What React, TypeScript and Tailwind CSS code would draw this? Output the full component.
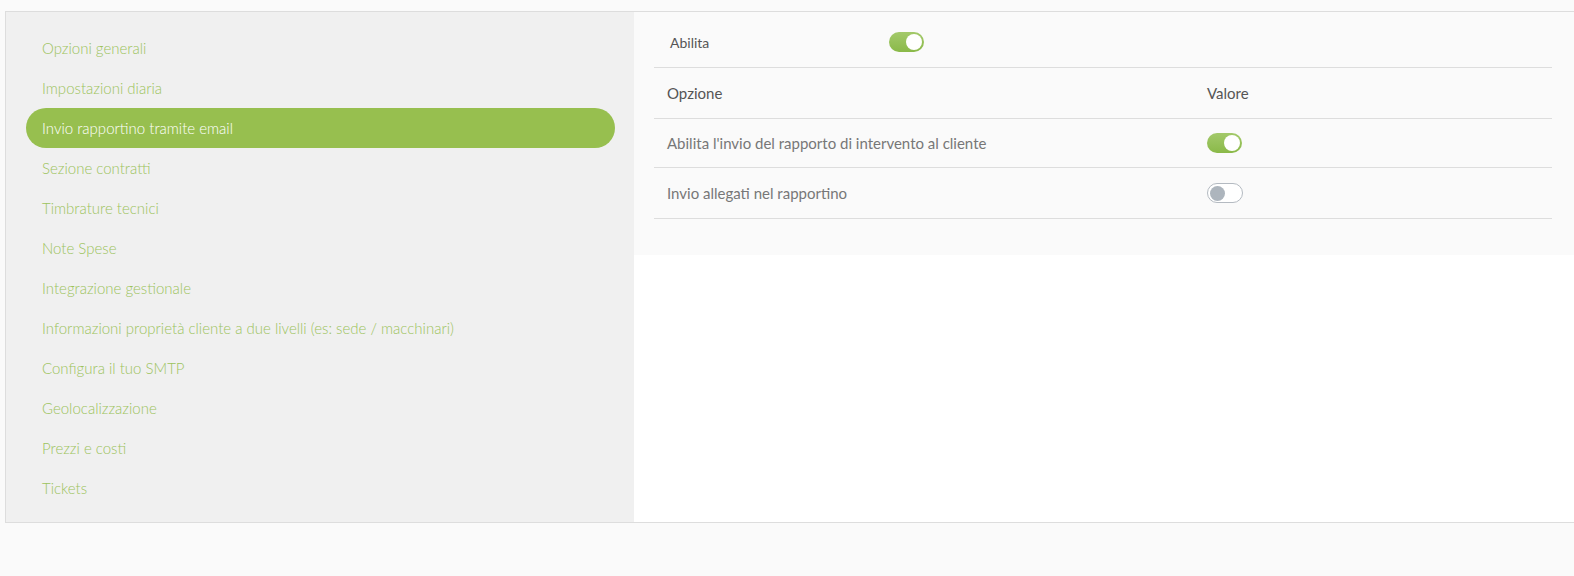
import React from "react";

const items = [
  "Opzioni generali",
  "Impostazioni diaria",
  "Invio rapportino tramite email",
  "Sezione contratti",
  "Timbrature tecnici",
  "Note Spese",
  "Integrazione gestionale",
  "Informazioni proprietà cliente a due livelli (es: sede / macchinari)",
  "Configura il tuo SMTP",
  "Geolocalizzazione",
  "Prezzi e costi",
  "Tickets",
];

function Toggle({ on }: { on: boolean }) {
  return on ? (
    <div className="w-[35px] h-[20px] rounded-full bg-gradient-to-b from-[#a3c96a] to-[#8ab948] flex items-center justify-end pr-[2px]">
      <div className="w-[16px] h-[16px] rounded-full bg-white" />
    </div>
  ) : (
    <div className="w-[36px] h-[20px] rounded-full bg-white border border-[#b4bac1] flex items-center pl-[2px]">
      <div className="w-[15px] h-[15px] rounded-full bg-[#adb5bd]" />
    </div>
  );
}

export default function App() {
  return (
    <div
      className="min-h-[576px] bg-[#fafafa] pt-[11px] pl-[5px]"
      style={{ fontFamily: "Lato, 'Open Sans', sans-serif" }}
    >
      <div className="flex border-t border-l border-b border-[#dddddd] h-[512px]">
        <div className="w-[628px] bg-[#f0f0f0] pt-[16px] pb-[14px]">
          {items.map((t, i) =>
            i === 2 ? (
              <div
                key={t}
                className="ml-[20px] w-[589px] h-[40px] rounded-full bg-[#97bf4f] text-white flex items-center pl-[16px] text-[15px] font-light"
              >
                {t}
              </div>
            ) : (
              <div
                key={t}
                className="h-[40px] flex items-center pl-[36px] text-[15px] font-light text-[#9cc35c]"
              >
                {t}
              </div>
            )
          )}
        </div>
        <div className="flex-1 bg-white">
          <div className="bg-[#fafafa] h-[243px] pl-[20px] pr-[22px]">
            <div className="h-[56px] pt-[5px] flex items-center border-b border-[#dddddd]">
              <div className="w-[235px] pl-[16px] text-[14px] text-[#555555]">Abilita</div>
              <Toggle on={true} />
            </div>
            <div className="grid grid-cols-[540px_1fr] h-[51px] items-center border-b border-[#dddddd] text-[15px] text-[#555555]">
              <div className="pl-[13px]">Opzione</div>
              <div className="pl-[13px]">Valore</div>
            </div>
            <div className="grid grid-cols-[540px_1fr] h-[49px] items-center border-b border-[#dddddd] text-[15px] text-[#777777]">
              <div className="pl-[13px]">Abilita l'invio del rapporto di intervento al cliente</div>
              <div className="pl-[13px]">
                <Toggle on={true} />
              </div>
            </div>
            <div className="grid grid-cols-[540px_1fr] h-[51px] items-center border-b border-[#dddddd] text-[15px] text-[#777777]">
              <div className="pl-[13px]">Invio allegati nel rapportino</div>
              <div className="pl-[13px]">
                <Toggle on={false} />
              </div>
            </div>
          </div>
        </div>
      </div>
    </div>
  );
}
